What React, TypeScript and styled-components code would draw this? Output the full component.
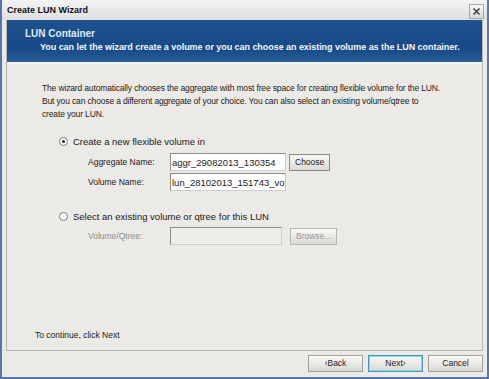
import React from "react";
import styled, { createGlobalStyle } from "styled-components";

const Global = createGlobalStyle`
  html, body { margin: 0; padding: 0; background: #5b7bb0; }
  body { font-family: "Liberation Sans", Arial, sans-serif; }
`;

const Window = styled.div`
  width: 489px;
  height: 379px;
  box-sizing: border-box;
  background: #eceae6;
  border: 2px solid #5676ad;
  border-top: none;
  display: flex;
  flex-direction: column;
`;

const TitleBar = styled.div`
  height: 20px;
  flex: none;
  display: flex;
  align-items: center;
  justify-content: space-between;
  padding: 0 3px 0 5px;
  background: linear-gradient(#f4f4f4, #dedede);
  font-weight: bold;
  font-size: 9px;
  color: #111;
`;

const CloseBtn = styled.div`
  width: 13px;
  height: 13px;
  border: 1px solid #a9a9a9;
  background: linear-gradient(#f7f7f7, #d9d9d9);
  display: flex;
  align-items: center;
  justify-content: center;
  margin-top: 2px;
`;

const Panel = styled.div`
  flex: 1;
  margin: 0 4px;
  border: 1px solid #b7b5b1;
  border-top: none;
  display: flex;
  flex-direction: column;
  background: #eceae6;
`;

const Header = styled.div`
  height: 44px;
  flex: none;
  background: linear-gradient(#1d528f, #174a86 70%, #2a5e98);
  border-bottom: 2px solid #f6f5f1;
  color: #ffffff;
  padding: 8px 0 0 18px;
  box-sizing: border-box;
`;

const HeaderTitle = styled.div`
  font-size: 10px;
  font-weight: bold;
  color: #dfe8f4;
`;

const HeaderSub = styled.div`
  font-size: 9px;
  font-weight: bold;
  margin: 3px 0 0 15px;
  white-space: nowrap;
  letter-spacing: -0.05px;
  color: #f2f5fa;
`;

const Body = styled.div`
  flex: 1;
  padding: 18px 0 0 35px;
  display: flex;
  flex-direction: column;
`;

const Intro = styled.p`
  margin: 0;
  font-size: 8.5px;
  line-height: 13px;
  letter-spacing: -0.15px;
  color: #222;
  white-space: nowrap;
`;

const RadioRow = styled.label<{ $top: number }>`
  display: flex;
  align-items: center;
  gap: 5px;
  margin: ${(p) => p.$top}px 0 0 17px;
  font-size: 9.5px;
  color: #1a1a1a;
`;

const RadioCircle = styled.span<{ $checked?: boolean }>`
  width: 7px;
  height: 7px;
  border-radius: 50%;
  border: 1px solid #7b7b7b;
  background: #fbfbfb;
  display: flex;
  align-items: center;
  justify-content: center;
  &::after {
    content: "";
    width: 3px;
    height: 3px;
    border-radius: 50%;
    background: ${(p) => (p.$checked ? "#222" : "transparent")};
  }
`;

const FieldGrid = styled.div<{ $top: number; $box: number }>`
  display: grid;
  grid-template-columns: 79px ${(p) => p.$box}px auto;
  column-gap: 3px;
  row-gap: 2px;
  align-items: center;
  margin: ${(p) => p.$top}px 0 0 46px;
`;

const FieldLabel = styled.div<{ $disabled?: boolean }>`
  font-size: 8.5px;
  color: ${(p) => (p.$disabled ? "#8f8d8a" : "#222")};
`;

const TextBox = styled.div<{ $disabled?: boolean }>`
  height: 18px;
  box-sizing: border-box;
  border: 1px solid #8e8c89;
  border-right-color: #cfcdc9;
  border-bottom-color: #cfcdc9;
  background: ${(p) => (p.$disabled ? "#efedea" : "#ffffff")};
  font-size: 9.5px;
  color: #222;
  padding: 3px 0 0 1px;
  white-space: nowrap;
  overflow: hidden;
`;

const SmallButton = styled.div<{ $disabled?: boolean }>`
  height: 17px;
  box-sizing: border-box;
  padding: 0 5px;
  margin-left: ${(p) => (p.$disabled ? 5 : 0)}px;
  border: 1px solid ${(p) => (p.$disabled ? "#b9b7b3" : "#8d8b87")};
  background: linear-gradient(#f8f8f6, #dcdad6);
  font-size: 8.5px;
  color: ${(p) => (p.$disabled ? "#9a9894" : "#222")};
  display: flex;
  align-items: center;
  justify-content: center;
  justify-self: start;
`;

const Footer = styled.div`
  margin-top: auto;
  padding: 0 0 10px 0;
  font-size: 8.5px;
  color: #222;
  margin-left: -7px;
`;

const ButtonBar = styled.div`
  height: 26px;
  flex: none;
  display: flex;
  justify-content: flex-end;
  align-items: center;
  gap: 5px;
  padding: 0 4px 2px 0;
  box-sizing: border-box;
`;

const WizButton = styled.div<{ $default?: boolean }>`
  width: 55px;
  height: 17px;
  box-sizing: border-box;
  border: 1px solid ${(p) => (p.$default ? "#3a9cc4" : "#a3a19e")};
  box-shadow: ${(p) => (p.$default ? "inset 0 0 0 1px #9ed0e4" : "none")};
  background: linear-gradient(#fbfbfa, #d8d6d2);
  font-size: 8.5px;
  color: #222;
  display: flex;
  align-items: center;
  justify-content: center;
`;

export default function App() {
  return (
    <>
      <Global />
      <Window>
        <TitleBar>
          <span>Create LUN Wizard</span>
          <CloseBtn>
            <svg width="9" height="9" viewBox="0 0 9 9">
              <path d="M1.5 1.5 L7.5 7.5 M7.5 1.5 L1.5 7.5" stroke="#444" strokeWidth="1.6" />
            </svg>
          </CloseBtn>
        </TitleBar>
        <Panel>
          <Header>
            <HeaderTitle>LUN Container</HeaderTitle>
            <HeaderSub>
              You can let the wizard create a volume or you can choose an existing volume as the LUN container.
            </HeaderSub>
          </Header>
          <Body>
            <Intro>
              The wizard automatically chooses the aggregate with most free space for creating flexible volume for the LUN.
              <br />
              But you can choose a different aggregate of your choice. You can also select an existing volume/qtree to
              <br />
              create your LUN.
            </Intro>
            <RadioRow $top={15}>
              <RadioCircle $checked />
              Create a new flexible volume in
            </RadioRow>
            <FieldGrid $top={6} $box={116}>
              <FieldLabel>Aggregate Name:</FieldLabel>
              <TextBox>aggr_29082013_130354</TextBox>
              <SmallButton>Choose</SmallButton>
              <FieldLabel>Volume Name:</FieldLabel>
              <TextBox>lun_28102013_151743_vo</TextBox>
              <span />
            </FieldGrid>
            <RadioRow $top={20}>
              <RadioCircle />
              Select an existing volume or qtree for this LUN
            </RadioRow>
            <FieldGrid $top={5} $box={112}>
              <FieldLabel $disabled>Volume/Qtree:</FieldLabel>
              <TextBox $disabled />
              <SmallButton $disabled>Browse...</SmallButton>
            </FieldGrid>
            <Footer>To continue, click Next</Footer>
          </Body>
        </Panel>
        <ButtonBar>
          <WizButton>‹Back</WizButton>
          <WizButton $default>Next›</WizButton>
          <WizButton>Cancel</WizButton>
        </ButtonBar>
      </Window>
    </>
  );
}
